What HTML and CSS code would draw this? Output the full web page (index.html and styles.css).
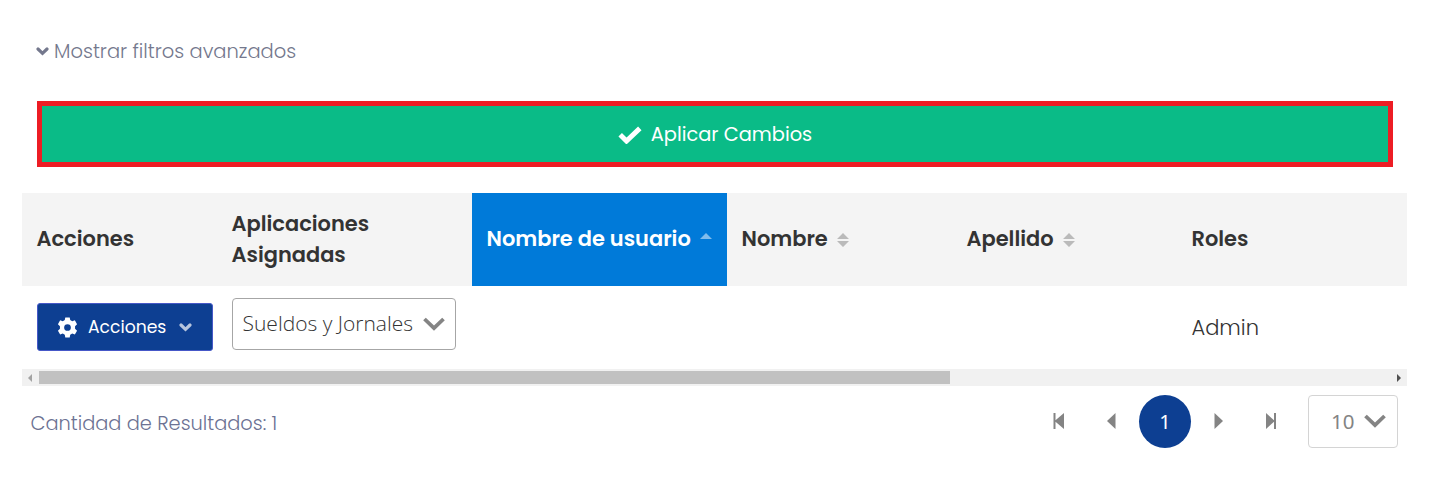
FILE: index.html
```html
<!DOCTYPE html>
<html lang="es">
<head>
<meta charset="utf-8">
<title>Usuarios</title>
<link rel="stylesheet" href="styles.css">
</head>
<body>
<main class="page">
  <a class="filters"><svg class="filters-icon" viewBox="0 0 13 9"><path d="M2 2 6.500 6.300 11 2"/></svg><span class="filters-text">Mostrar filtros avanzados</span></a>
  <button class="apply"><svg class="apply-icon" viewBox="0 0 24 18"><path d="M2.200 8.800 8.500 15 21.800 2.400"/></svg><span class="apply-text">Aplicar Cambios</span></button>
  <section class="table">
    <div class="row head">
      <div class="cell"><span>Acciones</span></div>
      <div class="cell"><span>Aplicaciones<br>Asignadas</span></div>
      <div class="cell sorted"><span>Nombre de usuario</span><svg class="sort" viewBox="0 0 12 14"><path d="M0 6 6 0l6 6z"/></svg></div>
      <div class="cell"><span>Nombre</span><svg class="sort" viewBox="0 0 12 14"><path d="M0 6 6 0l6 6zM0 8h12l-6 6z"/></svg></div>
      <div class="cell"><span>Apellido</span><svg class="sort" viewBox="0 0 12 14"><path d="M0 6 6 0l6 6zM0 8h12l-6 6z"/></svg></div>
      <div class="cell"><span>Roles</span></div>
    </div>
    <div class="row body">
      <div class="cell action-cell"><button class="actions"><svg class="gear" viewBox="0 0 20 20"><path fill-rule="evenodd" d="M7.900.4h4.200l.5 2.500 1.900 1.100 2.500-.8 2.100 3.600-1.900 1.900v2.400l1.900 1.900-2.100 3.600-2.500-.8-1.900 1.100-.5 2.700H7.900l-.5-2.700-1.900-1.100-2.500.8L.9 13l1.900-1.900V8.700L.9 6.800 3 3.200l2.500.8 1.900-1.100zM10 6.800a3.200 3.200 0 1 0 0 6.400 3.200 3.200 0 0 0 0-6.400z"/></svg><span>Acciones</span><svg class="actions-caret" viewBox="0 0 13 9"><path d="M2 2 6.500 6.300 11 2"/></svg></button></div>
      <div class="cell app-cell"><div class="select"><span class="select-text">Sueldos y Jornales</span><svg class="chevron" viewBox="0 0 22 14"><path d="M1.500 2 11 11.200 20.500 2"/></svg></div></div>
      <div class="cell"></div><div class="cell"></div><div class="cell"></div>
      <div class="cell"><span class="role">Admin</span></div>
    </div>
    <div class="scroll"><svg class="arrow left" viewBox="0 0 4 8"><path d="M4 0v8L0 4z"/></svg><div class="thumb"></div><svg class="arrow" viewBox="0 0 4 8"><path d="M0 0v8l4-4z"/></svg></div>
  </section>
  <footer class="footer">
    <span class="count">Cantidad de Resultados: 1</span>
    <nav class="pager">
      <span class="page-item"><svg viewBox="0 0 12 16"><path d="M.5 0h2v7.300L11 0v16L2.500 8.700V16h-2z"/></svg></span>
      <span class="page-item"><svg viewBox="0 0 12 16"><path d="M9.500 0v16L1 8z"/></svg></span>
      <span class="page-item current">1</span>
      <span class="page-item"><svg viewBox="0 0 12 16"><path d="M2.500 0v16L11 8z"/></svg></span>
      <span class="page-item"><svg viewBox="0 0 12 16"><path d="M1 0v16l8-7.300V16h2V0H9v7.300z"/></svg></span>
    </nav>
    <div class="size"><span>10</span><svg class="chevron" viewBox="0 0 22 14"><path d="M1.500 2 11 11.200 20.500 2"/></svg></div>
  </footer>
</main>
</body>
</html>
```
FILE: styles.css
```css
* { box-sizing: border-box; }
body { margin: 0; background: #fff; font-family: Poppins, Inter, sans-serif; color: #333; }
svg { display: block; flex: none; }
button { font: inherit; margin: 0; padding: 0; }
span { white-space: nowrap; }
.page { width: 1430px; height: 483px; padding: 36px 23px 0 22px; overflow: hidden; }
.filters { display: flex; align-items: center; height: 30px; margin-left: 14px; color: #74788d; font-weight: 300; font-size: 19.500px; }
.filters-icon { width: 13px; height: 9px; margin-right: 5px; }
.filters-icon path, .actions-caret path { fill: none; stroke: #74788d; stroke-width: 3.200; stroke-linecap: round; }
.apply { display: flex; align-items: center; justify-content: center; width: 1356px; height: 66px; margin: 35px 0 26px 15px; background: #0abb87; border: 5px solid #ed1c24; color: #fff; font-size: 19.400px; }
.apply-icon { width: 24px; height: 18px; margin: 1px 9px 0 0; }
.apply-icon path { fill: none; stroke: #fff; stroke-width: 5; }
.table { width: 1385px; }
.row { display: grid; grid-template-columns: 195px 255px 255px 225px 225px 230px; }
.cell { display: flex; align-items: center; padding: 0 15px 0 14.500px; }
.head { height: 93px; background: #f4f4f4; font-size: 20.950px; font-weight: 600; line-height: 31px; }
.head .cell { padding-bottom: 2px; }
.sorted { background: #007ad9; color: #fff; }
.sort { width: 12px; height: 14px; margin: 3px 0 0 9px; fill: #bababa; }
.sorted .sort { fill: #80bcec; }
.body { height: 83px; }
.action-cell { padding: 0 0 1px 15px; }
.actions { display: flex; align-items: center; flex: none; width: 176px; height: 48px; padding-left: 19px; border: 1px solid #4658c8; border-radius: 3px; background: #0d3f92; color: #fff; font-size: 17.200px; }
.gear { width: 21px; height: 21px; fill: #fff; margin-right: 10px; }
.actions-caret { width: 13px; height: 9px; margin: 1px 0 0 13px; }
.actions-caret path { stroke: #b6c5de; }
.app-cell { padding: 0 15px 7px; }
.select { display: flex; align-items: center; justify-content: space-between; width: 224px; height: 52px; padding: 0 10px 0 9.500px; border: 1px solid #a6a6a6; border-radius: 4px; font-family: "Open Sans", sans-serif; font-size: 21px; font-weight: 300; }
.select-text { padding-bottom: 2px; }
.chevron { width: 22px; height: 14px; }
.chevron path { fill: none; stroke: #848484; stroke-width: 3.800; }
.role { font-size: 21px; font-weight: 300; }
.scroll { display: flex; align-items: center; height: 17px; padding: 0 6px; background: #f1f1f1; }
.thumb { width: 911px; height: 13px; margin: 0 auto 0 7px; background: #c1c1c1; }
.arrow { width: 4px; height: 8px; fill: #505050; }
.arrow.left { fill: #a3a3a3; }
.footer { display: flex; align-items: center; height: 70px; padding: 0 9px 0 8.500px; }
.count { margin-top: 4px; color: #6c7293; font-size: 19.400px; font-weight: 300; }
.pager { display: flex; margin-left: auto; gap: 1px; }
.page-item { display: grid; place-items: center; width: 52px; height: 53px; fill: #848484; }
.page-item svg { width: 12px; height: 16px; }
.current { border-radius: 50%; background: #0d3f92; color: #fff; font-family: "Noto Sans", sans-serif; font-size: 20px; }
.size { display: flex; align-items: center; width: 90px; height: 53px; margin-left: 11px; padding-left: 22px; gap: 10px; border: 1px solid #d4d4d4; border-radius: 4px; color: #848484; font: 20.500px "Noto Sans", sans-serif; }
```
